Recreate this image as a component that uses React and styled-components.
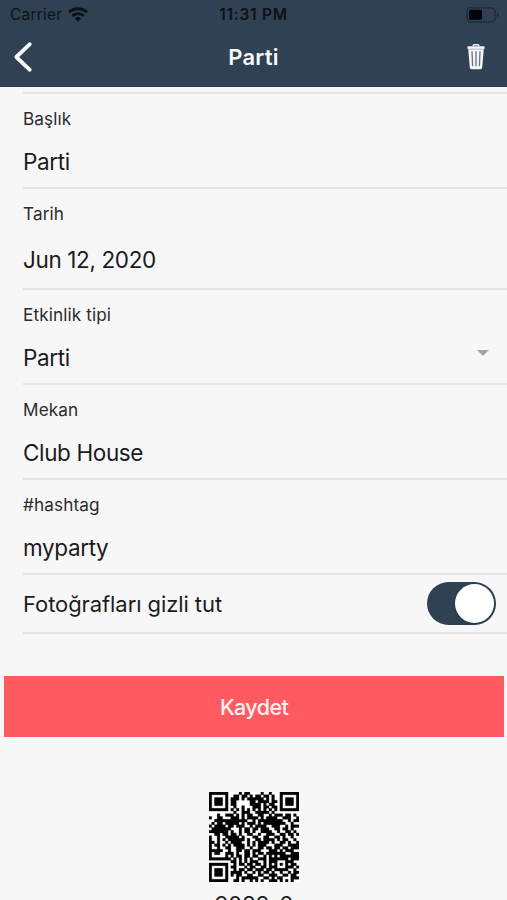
import { useState } from 'react';
import styled, { createGlobalStyle } from 'styled-components';

const qrRows = [
    'XXXXXXX....X.XX....X..X...XXXXXXX',
    'X.....X..XX.XX.X.XX.XX.X..X.....X',
    'X.XXX.X.XXX.X.XXXXXX.X.X..X.XXX.X',
    'X.XXX.X.XX.....XX.XXXX.XX.X.XXX.X',
    'X.XXX.X.XX.....XXXX.X.XX..X.XXX.X',
    'X.....X..X..X...XXX.XX.XX.X.....X',
    'XXXXXXX.X.X.X.X.X.X.X.X.X.XXXXXXX',
    '.........X..XXX..XXXXX.X.........',
    '...X..XXX.X.X.XX..XX..X.XXX.XX.X.',
    'X..XX...XXX.X.XXXX.X.XXXX..XXX..X',
    '..XXXXXXXXXXXX..X.XXXXXXXXX..X.XX',
    '.X.XX.XXXXX.X.XXX.X.XXXXXXXX..X..',
    'X.XXXX.XX.XXX..X.XXXX..XXX..X.XXX',
    '.XXXXXXX...X.XX.XX.XXX..XX.XX.X..',
    'XXXXXXX.X..X.XX.X..XXXX..X..XX.X.',
    '..XX.XX.XX.X..XX..X..XXX..XX.XX.X',
    'X..X..XXXXX.X...XX..XX..XX.X..X..',
    'X..X.X.XXXXXX.X..XX.XXXX.X.XX..X.',
    'XX.X..X.XXXX..X.X.XXXX.X..XX.X..X',
    'X.XX.X.X.XXXX.X.X.XXX...XXX..XXXX',
    'X..X..XX..XXX..X..XX.XX.XX.XX.XXX',
    'XXXXX..X..XX.XX.XXX...XXX.X.XXX..',
    'X.XX..XXX.X..XX.X.XX.XXXXXXX..XXX',
    'X.....X.X.XX.XX.XX..X.X.X.XXXXXXX',
    'XXXXXXXX.X.X.X.X..XXX.XXXXXXX.XXX',
    '........XX.X.X.XXX..X.XXX...XXX..',
    'XXXXXXX..X.XX.XX.XX.X.X.X.X.X.XX.',
    'X.....X.XX...X.XX..XX.XXX...XXX.X',
    'X.XXX.X..X.XX.XX.XXX.XX.XXXXX..X.',
    'X.XXX.X.XXXX.X..X.X.XX.X..X..X.XX',
    'X.XXX.X.X.XX..XX..XX..XXX..XX.XX.',
    'X.....X...X.XXXXXX..XX.X.XX...XXX',
    'XXXXXXX..XX.X..X.X.X..XXX.X.X.X..',
];

const qrPath = qrRows
    .map((row, y) => row.split('').map((cell, x) => (cell === 'X' ? `M${x} ${y}h1v1h-1z` : '')).join(''))
    .join('');

const fields = [
    { label: 'Başlık', value: 'Parti', height: 95 },
    { label: 'Tarih', value: 'Jun 12, 2020', height: 100.5, gap: 3 },
    { label: 'Etkinlik tipi', value: 'Parti', height: 95, select: true },
    { label: 'Mekan', value: 'Club House', height: 95 },
    { label: '#hashtag', value: 'myparty', height: 95.5 },
];

const Field = ({ label, value, height, gap, select }) => {
    return (
        <FieldRow $height={height}>
            <FieldLabel>{label}</FieldLabel>
            <FieldValue $gap={gap}>
                {value}
                {select && <Caret />}
            </FieldValue>
        </FieldRow>
    );
}

const App = () => {

    const [hidden, setHidden] = useState(true);

    return (
        <Screen>
            <GlobalStyle />

            <Header>
                <StatusBar>
                    <Carrier>
                        Carrier
                        <svg width="20" height="15" viewBox="0 0 20 15">
                            <g fill="none" stroke="#0d1117" strokeWidth="2.9">
                                <path d="M1 5.3a13 13 0 0 1 18 0" />
                                <path d="M4.2 8.9a8.4 8.4 0 0 1 11.6 0" />
                            </g>
                            <path d="M6.7 11.4a4.8 4.8 0 0 1 6.6 0L10 14.7z" fill="#0d1117" />
                        </svg>
                    </Carrier>
                    <Clock>11:31 PM</Clock>
                    <Battery>
                        <svg width="33" height="16" viewBox="0 0 33 16">
                            <rect x="1" y="0.8" width="28" height="14" rx="3.6" fill="none" stroke="#1d2a38" strokeWidth="1.3" />
                            <rect x="3" y="2.8" width="13" height="10" rx="1.5" fill="#020407" />
                            <path d="M30.8 5.3q2 .7 2 2.5t-2 2.5z" fill="#1d2a38" />
                        </svg>
                    </Battery>
                </StatusBar>

                <NavBar>
                    <NavButton aria-label="Geri">
                        <svg width="20" height="32" viewBox="0 0 20 32">
                            <path d="M16.8 3.2L3.3 16l13.5 12.8" fill="none" stroke="#f7f9fa" strokeWidth="3.8" strokeLinecap="round" strokeLinejoin="round" />
                        </svg>
                    </NavButton>
                    <Title>Parti</Title>
                    <NavButton aria-label="Sil" $end>
                        <svg width="18" height="26" viewBox="0 0 18 26">
                            <path d="M6 2.4q0-1.7 1.6-1.7h2.8q1.6 0 1.6 1.7" fill="none" stroke="#f5f7f8" strokeWidth="1.4" />
                            <path d="M.5 2.3h17v2.6H.5z" fill="#f5f7f8" />
                            <path d="M1.2 5.2h15.6l-1.6 18.4q-.1 1.7-1.7 1.7h-9q-1.6 0-1.7-1.7z" fill="#f5f7f8" />
                            <path d="M5 7.2l.6 15.1M9 7.2v15.1M13 7.2l-.6 15.1" stroke="#65727f" strokeWidth="1.3" />
                        </svg>
                    </NavButton>
                </NavBar>
            </Header>

            <Form>
                {fields.map((field) => <Field key={field.label} {...field} />)}
                <SwitchRow>
                    <span>Fotoğrafları gizli tut</span>
                    <Switch role="switch" aria-checked={hidden} $on={hidden} onClick={() => setHidden(!hidden)}>
                        <Knob />
                    </Switch>
                </SwitchRow>
            </Form>

            <SaveButton>Kaydet</SaveButton>

            <QrBlock>
                <svg width="90" height="90" viewBox="0 0 33 33">
                    <path d="M0 0h33v33H0z" fill="#fff" />
                    <path d={qrPath} fill="#050505" stroke="#050505" strokeWidth="0.1" />
                </svg>
                <QrCode>9088-6</QrCode>
            </QrBlock>
        </Screen>
    );
}

export default App;


const GlobalStyle = createGlobalStyle`
    * {
        box-sizing: border-box;
    }

    body {
        margin: 0;
        background: #f7f7f7;
        font-family: Inter, "Liberation Sans", sans-serif;
    }

    svg {
        display: block;
        flex: none;
    }
`;

const Screen = styled.div`
    width: 507px;
    height: 900px;
    overflow: hidden;
    display: flex;
    flex-direction: column;
    background: #f7f7f7;
    color: #1b1b1d;
`;

const Header = styled.header`
    flex: none;
    height: 87px;
    background: #304153;
    border-bottom: 1px solid #28394a;
`;

const StatusBar = styled.div`
    display: grid;
    grid-template-columns: 1fr auto 1fr;
    align-items: center;
    height: 29px;
    padding: 0 8px;
    color: #0d1117;
    font-size: 15.5px;
`;

const Carrier = styled.div`
    display: flex;
    align-items: center;
    gap: 6px;
    padding-left: 2px;
    letter-spacing: 0.2px;
`;

const Clock = styled.div`
    font-weight: 600;
    font-size: 15.5px;
    letter-spacing: 0.75px;
`;

const Battery = styled.div`
    display: flex;
    justify-content: flex-end;
`;

const NavBar = styled.div`
    display: grid;
    grid-template-columns: 1fr auto 1fr;
    align-items: center;
    height: 56px;
    padding: 0 13px;
`;

const NavButton = styled.button`
    display: flex;
    padding: 0;
    border: 0;
    background: none;
    justify-self: ${props => props.$end ? 'end' : 'start'};
    margin-right: ${props => props.$end ? '9px' : '0'};
`;

const Title = styled.h1`
    margin: 0;
    color: #f8f9fb;
    font-size: 22px;
    font-weight: 600;
    letter-spacing: 0.2px;
    line-height: 28px;
`;

const Form = styled.div`
    flex: none;
    margin: 5px 0 0 23px;
    border-top: 2px solid #e5e4e6;
`;

const FieldRow = styled.div`
    height: ${props => props.$height}px;
    padding-top: 14px;
    border-bottom: 2px solid #e4e4e4;
`;

const FieldLabel = styled.div`
    font-size: 17.2px;
    letter-spacing: 0.1px;
    line-height: 22px;
    color: #2b2b2d;
`;

const FieldValue = styled.div`
    display: flex;
    align-items: center;
    justify-content: space-between;
    margin-top: ${props => 18 + (props.$gap || 0)}px;
    padding-right: 18px;
    font-size: 22.5px;
    letter-spacing: -0.37px;
    line-height: 28px;
`;

const Caret = styled.span`
    margin-top: -9px;
    border: 6.5px solid transparent;
    border-top-color: #a3a3a3;
    border-bottom: 0;
`;

const SwitchRow = styled.div`
    display: flex;
    align-items: center;
    justify-content: space-between;
    height: 59px;
    padding-right: 11px;
    border-bottom: 2px solid #e4e4e4;
    font-size: 22px;
    letter-spacing: -0.08px;
`;

const Switch = styled.button`
    display: flex;
    align-items: center;
    justify-content: ${props => props.$on ? 'flex-end' : 'flex-start'};
    width: 69px;
    height: 43px;
    padding: 0 2px;
    border: 0;
    border-radius: 22px;
    background: ${props => props.$on ? '#304153' : '#dcdcde'};
`;

const Knob = styled.span`
    width: 39px;
    height: 39px;
    border-radius: 50%;
    background: #fff;
    box-shadow: 0 1px 3px rgba(0, 0, 0, 0.2);
`;

const SaveButton = styled.button`
    flex: none;
    height: 61px;
    margin: 42px 3px 0 4px;
    border: 0;
    background: #ff5a60;
    color: #fff1f1;
    font-family: inherit;
    font-size: 21.5px;
    font-weight: 500;
    letter-spacing: -0.6px;
`;

const QrBlock = styled.div`
    flex: none;
    display: flex;
    flex-direction: column;
    align-items: center;
    margin-top: 55px;
`;

const QrCode = styled.div`
    margin-top: 9px;
    font-size: 22.5px;
    letter-spacing: -0.4px;
    line-height: 28px;
`;
